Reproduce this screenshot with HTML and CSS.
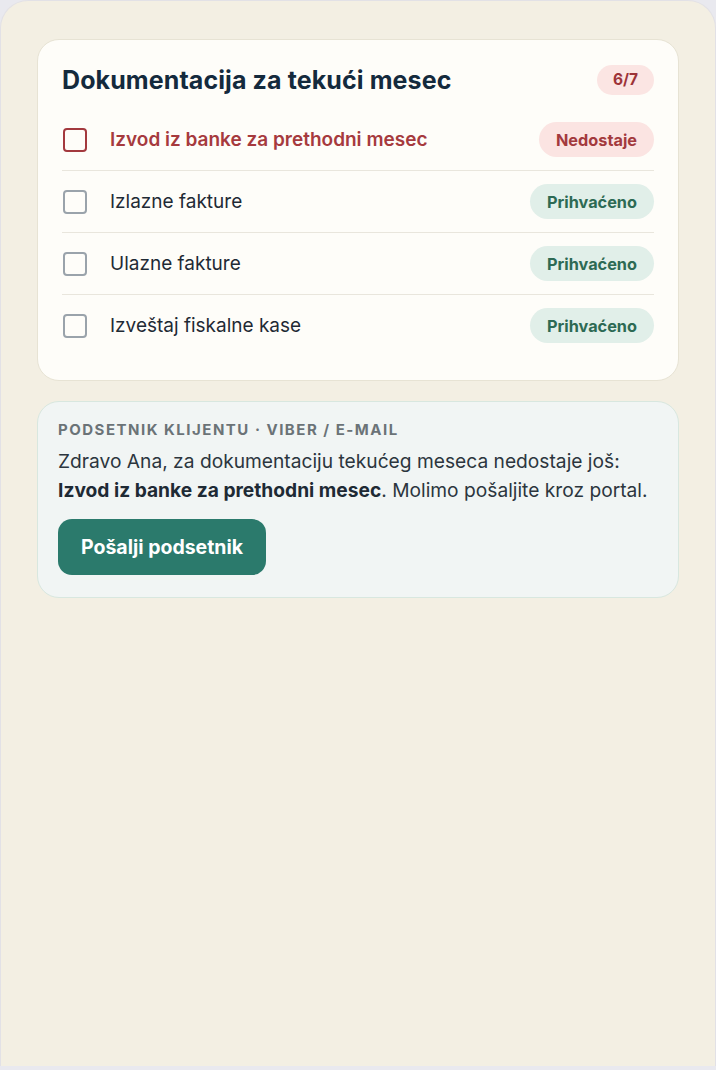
FILE: index.html
```html
<!DOCTYPE html>
<html lang="sr">
<head>
<meta charset="utf-8">
<title>Dokumentacija</title>
<link rel="stylesheet" href="styles.css">
</head>
<body>
<div class="frame">
  <section class="card docs">
    <header class="docs-head">
      <h1 class="docs-title">Dokumentacija za tekući mesec</h1>
      <span class="count">6/7</span>
    </header>
    <ul class="doc-list">
      <li class="doc missing">
        <span class="box"></span>
        <span class="doc-name">Izvod iz banke za prethodni mesec</span>
        <span class="pill pill-missing">Nedostaje</span>
      </li>
      <li class="doc">
        <span class="box"></span>
        <span class="doc-name">Izlazne fakture</span>
        <span class="pill pill-ok">Prihvaćeno</span>
      </li>
      <li class="doc">
        <span class="box"></span>
        <span class="doc-name">Ulazne fakture</span>
        <span class="pill pill-ok">Prihvaćeno</span>
      </li>
      <li class="doc">
        <span class="box"></span>
        <span class="doc-name">Izveštaj fiskalne kase</span>
        <span class="pill pill-ok">Prihvaćeno</span>
      </li>
    </ul>
  </section>
  <section class="card reminder">
    <div class="rem-label">PODSETNIK KLIJENTU · VIBER / E-MAIL</div>
    <p class="rem-text">Zdravo Ana, za dokumentaciju tekućeg meseca nedostaje još: <strong>Izvod iz banke za prethodni mesec</strong>. Molimo pošaljite kroz portal.</p>
    <button class="send-btn" type="button">Pošalji podsetnik</button>
  </section>
</div>
</body>
</html>
```
FILE: styles.css
```css
* { box-sizing: border-box; }
html, body { margin: 0; padding: 0; }
body {
  background: #e9e9ef;
  font-family: Inter, "Noto Sans", sans-serif;
  color: #1f2a35;
}
.frame {
  height: 1066px;
  background: #f3efe3;
  border: 1px solid #e2e1e6;
  border-bottom: none;
  border-radius: 28px 28px 0 0;
  padding: 38px 36px 0 36px;
  display: flex;
  flex-direction: column;
  gap: 20px;
}
.card {
  border-radius: 22px;
}
.docs {
  background: #fefdf9;
  border: 1px solid #e7e3d4;
  padding: 24px 24px 24px 24px;
}
.docs-head {
  display: flex;
  align-items: center;
  justify-content: space-between;
  height: 32px;
}
.docs-title {
  margin: 0;
  font-size: 25px;
  line-height: 32px;
  font-weight: 700;
  color: #142a3d;
  letter-spacing: 0.1px;
}
.count {
  background: #fbe5e3;
  color: #9d3338;
  font-size: 15.5px;
  font-weight: 700;
  border-radius: 15px;
  padding: 6px 16px;
  line-height: 18px;
}
.doc-list {
  list-style: none;
  margin: 13px 0 0 0;
  padding: 0;
}
.doc {
  display: flex;
  align-items: center;
  padding: 13px 0;
  border-bottom: 1px solid #e9e6dd;
}
.doc:last-child { border-bottom: none; }
.box {
  width: 24px;
  height: 24px;
  border: 2px solid #9aa3ab;
  border-radius: 4px;
  flex: none;
  margin-left: 1px;
}
.doc-name {
  flex: 1;
  margin-left: 23px;
  font-size: 19px;
  color: #1f2a35;
}
.missing .box { border-color: #a3393e; }
.missing .doc-name { color: #a63a3e; font-weight: 600; }
.pill {
  height: 35px;
  display: flex;
  align-items: center;
  padding: 0 17px;
  border-radius: 18px;
  font-size: 16.3px;
  font-weight: 700;
}
.pill-missing { background: #fbe4e2; color: #a3393d; }
.pill-ok { background: #e1efe9; color: #2d6a54; }
.reminder {
  background: #f1f5f4;
  border: 1px solid #d8e7df;
  padding: 19px 20px 22px 20px;
}
.rem-label {
  font-size: 15px;
  font-weight: 700;
  letter-spacing: 1.5px;
  color: #6b7377;
  line-height: 18px;
}
.rem-text {
  margin: 8px 0 0 0;
  font-size: 19.2px;
  line-height: 29px;
  color: #2c363e;
}
.rem-text strong { font-weight: 700; color: #1e2a34; }
.send-btn {
  margin-top: 14px;
  height: 56px;
  padding: 0 23px;
  border: none;
  border-radius: 14px;
  background: #2b7a6c;
  color: #fff;
  font-family: inherit;
  font-size: 19.5px;
  font-weight: 700;
}
```
